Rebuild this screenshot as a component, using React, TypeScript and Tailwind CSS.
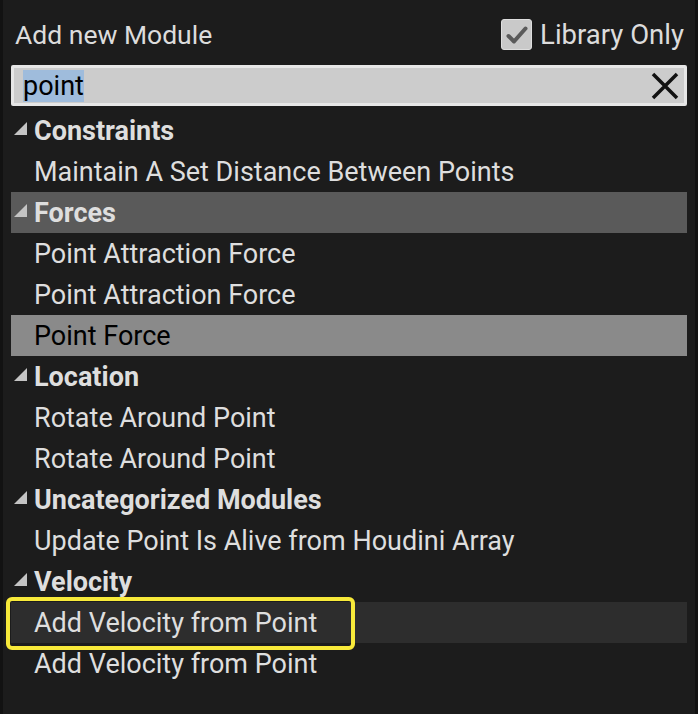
import React from "react";

const Tri = () => (
  <svg width="15" height="15" viewBox="0 0 15 15" className="shrink-0 mb-[4px]">
    <polygon points="14,1 14,14 1,14" fill="#c4c4c4" />
  </svg>
);

type Row = { kind: "h" | "i"; text: string; hl?: "dark" | "mid" | "light" };

const rows: Row[] = [
  { kind: "h", text: "Constraints" },
  { kind: "i", text: "Maintain A Set Distance Between Points" },
  { kind: "h", text: "Forces", hl: "mid" },
  { kind: "i", text: "Point Attraction Force" },
  { kind: "i", text: "Point Attraction Force" },
  { kind: "i", text: "Point Force", hl: "light" },
  { kind: "h", text: "Location" },
  { kind: "i", text: "Rotate Around Point" },
  { kind: "i", text: "Rotate Around Point" },
  { kind: "h", text: "Uncategorized Modules" },
  { kind: "i", text: "Update Point Is Alive from Houdini Array" },
  { kind: "h", text: "Velocity" },
  { kind: "i", text: "Add Velocity from Point", hl: "dark" },
  { kind: "i", text: "Add Velocity from Point" },
];

export default function App() {
  return (
    <div
      className="relative w-[698px] h-[714px] bg-[#1c1c1c] border-l-[3px] border-r-[3px] border-[#121212] overflow-hidden"
      style={{ fontFamily: "Roboto, 'Noto Sans', sans-serif" }}
    >
      <div className="h-[65px] flex items-center justify-between pl-[12px] pr-[11px] pt-[4px]">
        <span className="text-[26.5px] leading-[32px] text-[#dcdcdc]">Add new Module</span>
        <div className="flex items-center gap-[8px]">
          <div className="w-[31px] h-[31px] rounded-[3px] bg-[#c9c9c9] border border-[#dedede] flex items-center justify-center">
            <svg width="24" height="24" viewBox="0 0 24 24">
              <path d="M3.5 13 L9 18.5 L20.5 5.5" fill="none" stroke="#5a5a5a" strokeWidth="4" strokeLinecap="round" strokeLinejoin="round" />
            </svg>
          </div>
          <span className="text-[27.5px] leading-[32px] text-[#dcdcdc]">Library Only</span>
        </div>
      </div>
      <div className="mx-[8px] h-[41px] bg-[#e6e6e6] p-[3px] rounded-[2px]">
        <div className="h-full bg-[#cccccc] flex items-center justify-between pl-[9px] pr-[4px]">
          <span className="text-[27px] leading-[32px] text-black bg-[#9fbcdc]">point</span>
          <svg width="30" height="30" viewBox="0 0 30 30">
            <path d="M3 3 L27 27 M27 3 L3 27" stroke="#111" strokeWidth="3.5" strokeLinecap="butt" />
          </svg>
        </div>
      </div>
      <div className="mt-[4px] mx-[8px] flex flex-col">
        {rows.map((r, i) => {
          const bg =
            r.hl === "mid" ? "bg-[#5a5a5a]" : r.hl === "light" ? "bg-[#8a8a8a]" : r.hl === "dark" ? "bg-[#2d2d2d]" : "";
          const color = r.hl === "light" ? "text-black" : "text-[#dedede]";
          return (
            <div key={i} className={`h-[41px] flex items-center ${bg}`}>
              {r.kind === "h" ? (
                <div className="flex items-center pl-[2px] gap-[6px]">
                  <Tri />
                  <span className={`text-[27px] leading-[32px] font-bold ${color}`}>{r.text}</span>
                </div>
              ) : (
                <span className={`pl-[23px] text-[27px] leading-[32px] ${color}`}>{r.text}</span>
              )}
            </div>
          );
        })}
      </div>
      <div className="absolute left-[3px] top-[597px] w-[349px] h-[53px] border-[4px] border-[#f8ea3a] rounded-[6px]" />
    </div>
  );
}
